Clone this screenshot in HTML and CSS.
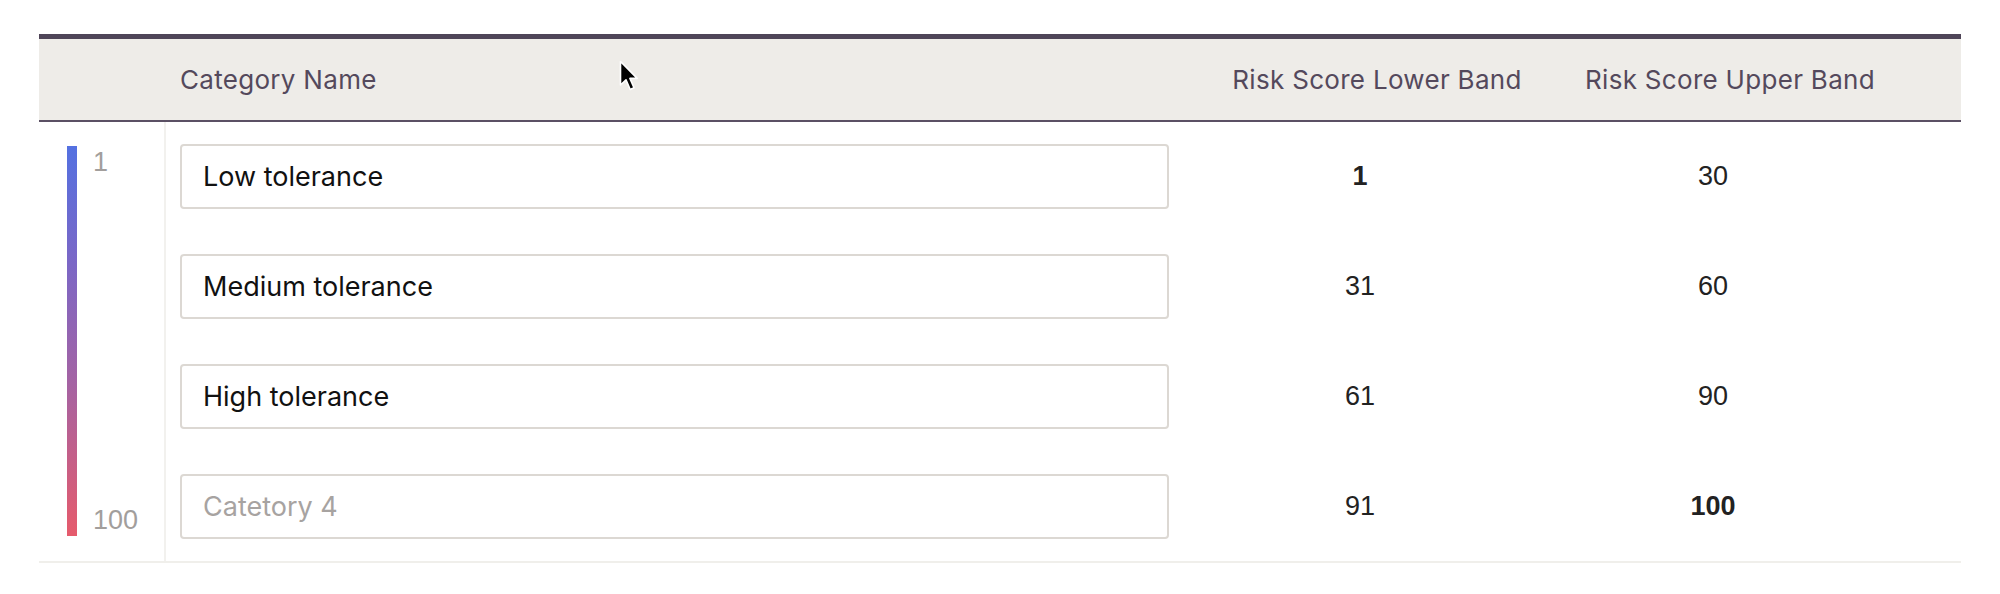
FILE: index.html
```html
<!DOCTYPE html>
<html lang="en">
<head>
<meta charset="utf-8">
<title>Risk categories</title>
<link rel="stylesheet" href="styles.css">
</head>
<body>
<div class="page">
  <div class="table">
    <div class="head">
      <div class="h-cell h-scale"></div>
      <div class="h-cell h-name">Category Name</div>
      <div class="h-cell h-num">Risk Score Lower Band</div>
      <div class="h-cell h-num">Risk Score Upper Band</div>
      <div class="h-cell h-act"></div>
    </div>
    <div class="body">
      <div class="scale">
        <div class="bar"></div>
        <div class="scale-labels">
          <span class="scale-label">1</span>
          <span class="scale-label">100</span>
        </div>
      </div>
      <div class="rows">
        <div class="row">
          <div class="name-cell"><input class="name-input" type="text" value="Low tolerance"></div>
          <div class="num bold">1</div>
          <div class="num">30</div>
          <div class="act"></div>
        </div>
        <div class="row">
          <div class="name-cell"><input class="name-input" type="text" value="Medium tolerance"></div>
          <div class="num">31</div>
          <div class="num">60</div>
          <div class="act"></div>
        </div>
        <div class="row">
          <div class="name-cell"><input class="name-input" type="text" value="High tolerance"></div>
          <div class="num">61</div>
          <div class="num">90</div>
          <div class="act"></div>
        </div>
        <div class="row">
          <div class="name-cell"><input class="name-input" type="text" placeholder="Catetory 4"></div>
          <div class="num">91</div>
          <div class="num bold">100</div>
          <div class="act"></div>
        </div>
      </div>
    </div>
  </div>
  <svg class="cursor" width="22" height="32" viewBox="0 0 22 32" aria-hidden="true">
    <path d="M1.5 1.5 L1.5 25 L7 19.8 L11.2 29.5 L15 27.8 L10.9 18.4 L18.2 18.4 Z" fill="#000" stroke="#fff" stroke-width="1.6" stroke-linejoin="round"/>
  </svg>
</div>
</body>
</html>
```

FILE: styles.css
```css
html, body {
  margin: 0;
  padding: 0;
  background: #ffffff;
}

.page {
  position: relative;
  padding: 34px 39px 0 39px;
  font-family: "Inter", "Roboto", "Liberation Sans", sans-serif;
}

.table {
  width: 1922px;
}

.head {
  display: grid;
  grid-template-columns: 127px 1018px 352px 354px 1fr;
  height: 81px;
  background: #eeece8;
  border-top: 5px solid #4f4558;
  border-bottom: 2px solid #5b5064;
}

.h-cell {
  display: flex;
  align-items: center;
  font-size: 26px;
  color: #54495c;
  letter-spacing: 0.3px;
  white-space: nowrap;
}

.h-name {
  padding-left: 14px;
}

.h-num {
  justify-content: center;
  padding-left: 34px;
}

.body {
  display: grid;
  grid-template-columns: 127px 1fr;
  border-bottom: 2px solid #f0efeb;
}

.scale {
  display: flex;
  padding: 24px 0 25px 28px;
  border-right: 2px solid #f2f1ee;
}

.bar {
  width: 10px;
  background: linear-gradient(to bottom, #5471e1 0%, #7b67c6 30%, #a363a4 60%, #e65b6c 100%);
}

.scale-labels {
  display: flex;
  flex-direction: column;
  justify-content: space-between;
  margin-left: 16px;
  font-family: "Liberation Sans", Arial, sans-serif;
  font-size: 27px;
  line-height: 30px;
  color: #a29e9c;
}

.scale-label:first-child {
  margin-top: 1px;
}

.scale-label:last-child {
  margin-bottom: 1px;
}

.rows {
  display: flex;
  flex-direction: column;
  gap: 45px;
  padding: 22px 0;
}

.row {
  display: grid;
  grid-template-columns: 1018px 352px 354px 1fr;
  height: 65px;
}

.name-cell {
  padding: 0 15px 0 14px;
}

.name-input {
  box-sizing: border-box;
  display: block;
  width: 100%;
  height: 65px;
  margin: 0;
  padding: 0 0 0 21px;
  border: 2px solid #dcd8d3;
  border-radius: 4px;
  background: #ffffff;
  font-family: "Inter", "Roboto", sans-serif;
  font-size: 27px;
  color: #111111;
  outline: none;
}

.name-input::placeholder {
  color: #a7a3a1;
  opacity: 1;
}

.num {
  display: flex;
  align-items: center;
  justify-content: center;
  font-family: "Liberation Sans", Arial, sans-serif;
  font-size: 27px;
  color: #222222;
}

.num.bold {
  font-weight: 700;
}

.cursor {
  position: absolute;
  left: 619px;
  top: 60px;
}
```
